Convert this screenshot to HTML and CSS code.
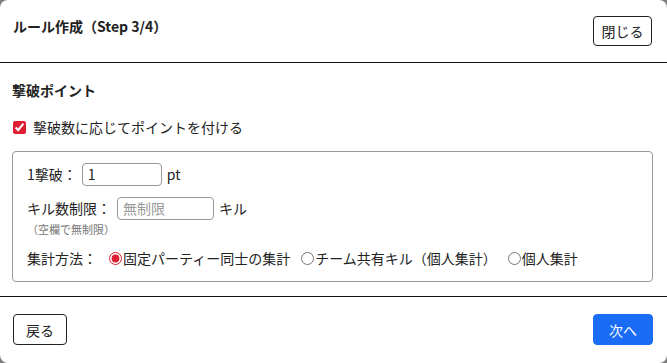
FILE: index.html
```html
<!DOCTYPE html>
<html lang="ja">
<head>
<meta charset="utf-8">
<link rel="stylesheet" href="styles.css">
</head>
<body>
<div class="modal">
  <div class="header">
    <div class="title">ルール作成（Step 3/4）</div>
    <button class="btn">閉じる</button>
  </div>
  <div class="body">
    <div class="section-title">撃破ポイント</div>
    <label class="check-row"><input type="checkbox" checked><span>撃破数に応じてポイントを付ける</span></label>
    <div class="box">
      <div class="row"><span class="lbl">1撃破：</span><input class="txt w1" type="text" value="1"><span>pt</span></div>
      <div class="row row2"><span class="lbl">キル数制限：</span><input class="txt w2" type="text" placeholder="無制限"><span>キル</span></div>
      <div class="note">（空欄で無制限）</div>
      <div class="row row3"><span class="lbl">集計方法：</span>
        <label class="radio"><input type="radio" name="m" checked>固定パーティー同士の集計</label>
        <label class="radio"><input type="radio" name="m">チーム共有キル（個人集計）</label>
        <label class="radio"><input type="radio" name="m">個人集計</label>
      </div>
    </div>
  </div>
  <div class="footer">
    <button class="btn">戻る</button>
    <button class="btn primary">次へ</button>
  </div>
</div>
</body>
</html>
```
FILE: styles.css
```css
* { box-sizing: border-box; }
html, body { margin: 0; padding: 0; }
body {
  background: #7f7f7f;
  font-family: "Noto Sans CJK JP", "Open Sans", sans-serif;
  font-size: 14px;
  color: #222;
}
.modal {
  width: 667px;
  height: 363px;
  background: #fff;
  border-radius: 8px;
  display: flex;
  flex-direction: column;
  overflow: hidden;
}
.header {
  display: flex;
  justify-content: space-between;
  align-items: flex-start;
  padding: 16px 15px 0 13px;
  height: 63px;
  border-bottom: 1px solid #111;
}
.title {
  font-weight: bold;
  font-size: 14px;
  line-height: 20px;
}
.btn {
  font-family: "Noto Sans CJK JP", sans-serif;
  font-size: 14px;
  background: #fff;
  color: #222;
  border: 1px solid #222;
  border-radius: 4px;
  height: 30px;
  padding: 0 9px;
  line-height: 1;
}
.header .btn { width: 59px; padding: 0; }
.body {
  flex: 1;
  padding: 17px 14px 0 12px;
  border-bottom: 1px solid #111;
}
.section-title {
  font-weight: bold;
  line-height: 20px;
}
.check-row {
  display: flex;
  align-items: center;
  margin-top: 17px;
  line-height: 20px;
}
.check-row input {
  accent-color: #dc1f33;
  width: 13px;
  height: 13px;
  margin: 0 7px 0 1px;
}
.box {
  margin-top: 14px;
  border: 1px solid #9a9a9a;
  border-radius: 4px;
  height: 131px;
  padding: 10px 14px 0 14px;
}
.row {
  display: flex;
  align-items: center;
  height: 24px;
  line-height: 20px;
}
.lbl { margin-right: 7px; }
.row2 { margin-top: 10px; }
.txt {
  font-family: "Noto Sans CJK JP", sans-serif;
  font-size: 14px;
  height: 23px;
  border: 1px solid #9a9a9a;
  border-radius: 4px;
  padding: 0 5px;
  margin-right: 5px;
  color: #222;
}
.txt::placeholder { color: #9a9a9a; }
.w1 { width: 80px; margin-left: -2px; }
.w2 { width: 97px; margin-left: -1px; }
.note {
  font-size: 11px;
  color: #777;
  line-height: 16px;
  margin-top: 1px;
}
.row3 { margin-top: 9px; }
.row3 .lbl { margin-right: 12px; }
.radio {
  display: flex;
  align-items: center;
  margin-right: 11px;
}
.radio input {
  accent-color: #dc1f33;
  width: 13px;
  height: 13px;
  margin: 0 1px 0 0;
}
.footer {
  display: flex;
  justify-content: space-between;
  align-items: flex-start;
  padding: 17px 14px 0 13px;
  height: 66px;
}
.footer .btn { width: 54px; height: 31px; padding: 0; }
.footer .primary {
  width: 60px;
  background: #1a6cf5;
  border-color: #1a6cf5;
  color: #fff;
}
```
